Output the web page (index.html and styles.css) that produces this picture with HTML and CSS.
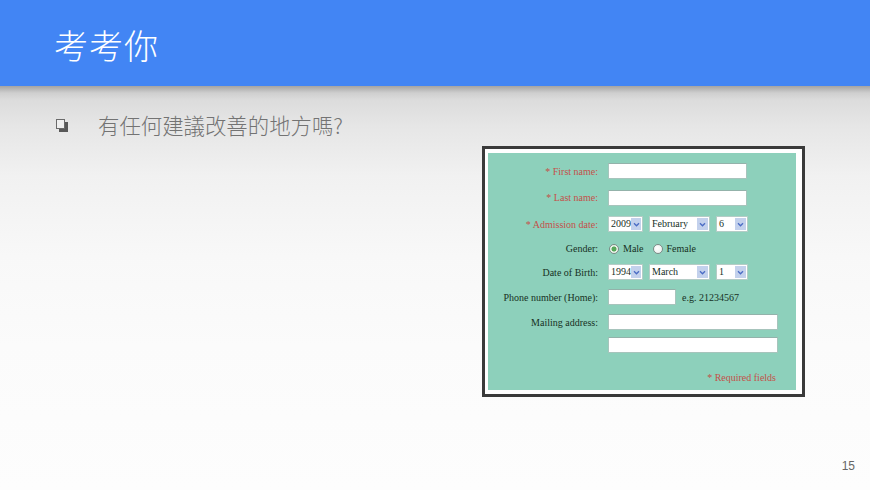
FILE: index.html
```html
<!DOCTYPE html>
<html lang="zh-Hant">
<head>
<meta charset="utf-8">
<title>考考你</title>
<link rel="stylesheet" href="styles.css">
</head>
<body>
<div class="slide">
  <header class="header">
    <h1 class="title">考考你</h1>
  </header>
  <main class="main">
    <div class="bullet-row">
      <span class="bullet"></span>
      <span class="bullet-text">有任何建議改善的地方嗎?</span>
    </div>
    <figure class="shot">
      <div class="form">
        <div class="row">
          <span class="label req">* First name:</span>
          <span class="field"><span class="input w139"></span></span>
        </div>
        <div class="row h27">
          <span class="label req">* Last name:</span>
          <span class="field"><span class="input w139"></span></span>
        </div>
        <div class="row">
          <span class="label req">* Admission date:</span>
          <span class="field">
            <span class="sel w35"><span class="val">2009</span><span class="arrow"><svg viewBox="0 0 8 6" width="7" height="5"><path d="M1 1.5 L4 4.5 L7 1.5" fill="none" stroke="#4a6cc4" stroke-width="1.6"/></svg></span></span>
            <span class="sel w61"><span class="val">February</span><span class="arrow"><svg viewBox="0 0 8 6" width="7" height="5"><path d="M1 1.5 L4 4.5 L7 1.5" fill="none" stroke="#4a6cc4" stroke-width="1.6"/></svg></span></span>
            <span class="sel w32"><span class="val">6</span><span class="arrow"><svg viewBox="0 0 8 6" width="7" height="5"><path d="M1 1.5 L4 4.5 L7 1.5" fill="none" stroke="#4a6cc4" stroke-width="1.6"/></svg></span></span>
          </span>
        </div>
        <div class="row h23">
          <span class="label">Gender:</span>
          <span class="field">
            <span class="radio on"></span><span class="opt">Male</span>
            <span class="radio"></span><span class="opt">Female</span>
          </span>
        </div>
        <div class="row h24">
          <span class="label">Date of Birth:</span>
          <span class="field">
            <span class="sel w35"><span class="val">1994</span><span class="arrow"><svg viewBox="0 0 8 6" width="7" height="5"><path d="M1 1.5 L4 4.5 L7 1.5" fill="none" stroke="#4a6cc4" stroke-width="1.6"/></svg></span></span>
            <span class="sel w61"><span class="val">March</span><span class="arrow"><svg viewBox="0 0 8 6" width="7" height="5"><path d="M1 1.5 L4 4.5 L7 1.5" fill="none" stroke="#4a6cc4" stroke-width="1.6"/></svg></span></span>
            <span class="sel w32"><span class="val">1</span><span class="arrow"><svg viewBox="0 0 8 6" width="7" height="5"><path d="M1 1.5 L4 4.5 L7 1.5" fill="none" stroke="#4a6cc4" stroke-width="1.6"/></svg></span></span>
          </span>
        </div>
        <div class="row">
          <span class="label">Phone number (Home):</span>
          <span class="field"><span class="input w68"></span><span class="hint">e.g. 21234567</span></span>
        </div>
        <div class="row h24">
          <span class="label">Mailing address:</span>
          <span class="field"><span class="input w170"></span></span>
        </div>
        <div class="row h22">
          <span class="label"></span>
          <span class="field"><span class="input w170"></span></span>
        </div>
        <div class="required">* Required fields</div>
      </div>
    </figure>
    <footer class="page-num">15</footer>
  </main>
</div>
</body>
</html>
```

FILE: styles.css
```css
html, body {
  margin: 0;
  padding: 0;
}
body {
  width: 870px;
  height: 490px;
  overflow: hidden;
  font-family: "Noto Sans CJK TC", "Noto Sans", sans-serif;
}
.slide {
  width: 870px;
  height: 490px;
  display: flex;
  flex-direction: column;
}
.header {
  height: 86px;
  flex: none;
  background: #4285f4;
  display: flex;
  align-items: center;
  padding-left: 54px;
  box-sizing: border-box;
}
.title {
  margin: 0;
  margin-top: 4px;
  font-family: "Noto Sans CJK TC", sans-serif;
  font-weight: 300;
  font-size: 34px;
  line-height: 40px;
  color: #ffffff;
  letter-spacing: 1px;
}
.main {
  flex: 1;
  display: flex;
  flex-direction: column;
  background: linear-gradient(to bottom, #a4a4a4 0px, #cfcfcf 7px, #dcdcdc 14px, #e6e6e6 40px, #f1f1f1 90px, #f8f8f8 170px, #fbfbfb 260px, #fdfdfd 404px);
}
.bullet-row {
  display: flex;
  align-items: center;
  height: 26px;
  margin-top: 26px;
  padding-left: 56px;
}
.bullet {
  width: 7px;
  height: 8px;
  border: 1px solid #6a6a6a;
  background: #efefef;
  box-shadow: 3px 3px 0 #585858;
  margin-right: 33px;
  margin-top: -2px;
}
.bullet-text {
  font-size: 21.4px;
  line-height: 26px;
  color: #737373;
  font-weight: 300;
}
.shot {
  margin: 8px 0 0 482px;
  width: 323px;
  height: 251px;
  box-sizing: border-box;
  border: 3px solid #3a3a3a;
  background: #ffffff;
  padding: 4px 6px 4px 3px;
}
.form {
  height: 100%;
  background: #8dd0bb;
  padding-top: 5px;
  box-sizing: border-box;
  font-family: "Liberation Serif", "Times New Roman", serif;
  font-size: 10px;
  color: #17301f;
}
.row {
  display: grid;
  grid-template-columns: 110px auto;
  column-gap: 10px;
  align-items: center;
  height: 26px;
}
.row.h27 { height: 27px; }
.row.h23 { height: 23px; }
.row.h24 { height: 24px; }
.row.h22 { height: 22px; }
.label {
  text-align: right;
  white-space: nowrap;
}
.label.req {
  color: #c4504a;
}
.field {
  display: flex;
  align-items: center;
}
.input {
  display: block;
  height: 16px;
  box-sizing: border-box;
  background: #ffffff;
  border: 1px solid #a7c4bc;
  border-top-color: #93b2aa;
}
.w139 { width: 139px; }
.w68 { width: 68px; }
.w170 { width: 170px; }
.hint {
  margin-left: 6px;
}
.sel {
  display: flex;
  align-items: center;
  justify-content: space-between;
  height: 16px;
  box-sizing: border-box;
  background: #ffffff;
  border: 1px solid #b4ccc6;
  padding: 1px;
  margin-right: 6px;
}
.sel:last-child { margin-right: 0; }
.w35 { width: 35px; }
.w61 { width: 61px; }
.w32 { width: 32px; }
.val {
  padding-left: 1px;
  line-height: 12px;
}
.arrow {
  width: 11px;
  height: 12px;
  background: #c3d1ec;
  display: flex;
  align-items: center;
  justify-content: center;
}
.radio {
  width: 10px;
  height: 10px;
  box-sizing: border-box;
  border-radius: 50%;
  border: 1px solid #7d8a86;
  background: radial-gradient(circle at 40% 40%, #ffffff 0, #e6ece9 100%);
  margin-left: 1px;
  margin-right: 4px;
}
.radio.on {
  background: radial-gradient(circle, #57a85a 0, #57a85a 2.2px, #e3f1e3 2.8px, #ffffff 100%);
}
.opt {
  margin-right: 8px;
}
.required {
  margin-top: 11px;
  text-align: right;
  padding-right: 20px;
  color: #c4504a;
  line-height: 22px;
}
.page-num {
  margin-top: auto;
  text-align: right;
  padding: 0 15px 17px 0;
  font-family: "Liberation Sans", Arial, sans-serif;
  font-size: 12px;
  line-height: 14px;
  color: #666666;
}
```
